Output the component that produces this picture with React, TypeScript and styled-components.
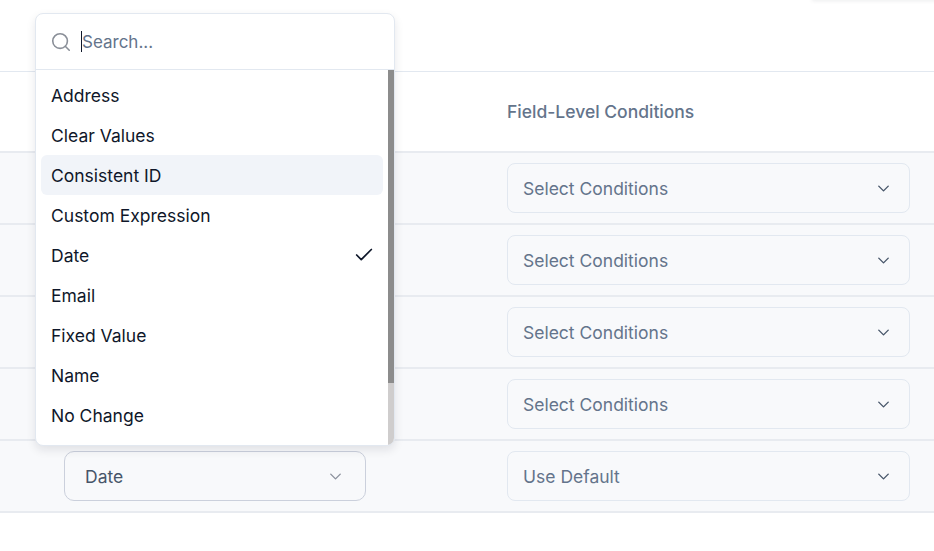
import styled, { createGlobalStyle } from 'styled-components';
import { Check, ChevronDown, Search } from 'lucide-react';

const GlobalStyle = createGlobalStyle`
	html, body {
		margin: 0;
		padding: 0;
		background: #fff;
		overflow: hidden;
	}
	body {
		font-family: Inter, 'Liberation Sans', sans-serif;
		font-size: 17.5px;
		color: #0f172a;
	}
	* {
		box-sizing: border-box;
	}
`;

type RowData = {
	method: string | null;
	condition: string;
};

const rows: RowData[] = [
	{ method: null, condition: 'Select Conditions' },
	{ method: null, condition: 'Select Conditions' },
	{ method: null, condition: 'Select Conditions' },
	{ method: null, condition: 'Select Conditions' },
	{ method: 'Date', condition: 'Use Default' },
];

const options = [
	'Address',
	'Clear Values',
	'Consistent ID',
	'Custom Expression',
	'Date',
	'Email',
	'Fixed Value',
	'Name',
	'No Change',
];

export default function App() {
	return (
		<Page>
			<GlobalStyle />
			<CornerShadow />
			<TopBar />
			<HeaderRow>
				<span />
				<HeaderLabel>Field-Level Conditions</HeaderLabel>
			</HeaderRow>
			{rows.map((row, i) => (
				<Row key={i}>
					<div>
						{row.method && (
							<SelectBox $active>
								<MethodValue>{row.method}</MethodValue>
								<ChevronDown size={19} color="#8b909c" strokeWidth={1.75} />
							</SelectBox>
						)}
					</div>
					<SelectBox>
						<ConditionValue>{row.condition}</ConditionValue>
						<ChevronDown size={19} color="#475569" strokeWidth={1.75} />
					</SelectBox>
				</Row>
			))}

			<Dropdown>
				<SearchBar>
					<SearchIcon size={22} color="#8a8f98" strokeWidth={1.75} />
					<Caret />
					<SearchInput placeholder="Search..." />
				</SearchBar>
				<OptionList>
					{options.map((option) => (
						<Option key={option} $highlighted={option === 'Consistent ID'}>
							{option}
							{option === 'Date' && <SelectedMark size={22} color="#0f172a" strokeWidth={1.9} />}
						</Option>
					))}
				</OptionList>
				<ScrollTrack>
					<ScrollThumb />
				</ScrollTrack>
			</Dropdown>
		</Page>
	);
}

const Page = styled.div`
	position: relative;
	width: 934px;
	height: 551px;
	overflow: hidden;
`;

const CornerShadow = styled.div`
	position: absolute;
	top: -20px;
	right: -20px;
	width: 142px;
	height: 20px;
	box-shadow: 0 1px 4px rgba(15, 23, 42, 0.08);
`;

const TopBar = styled.div`
	height: 72px;
	border-bottom: 1px solid #e2e8f0;
`;

const HeaderRow = styled.div`
	display: grid;
	grid-template-columns: 302px 403px;
	column-gap: 141px;
	align-items: center;
	height: 81px;
	padding-left: 64px;
	border-bottom: 2px solid #e8ebf0;
`;

const HeaderLabel = styled.div`
	font-weight: 500;
	color: #64748b;
`;

const Row = styled.div`
	display: grid;
	grid-template-columns: 302px 403px;
	column-gap: 141px;
	align-items: center;
	height: 72px;
	padding-left: 64px;
	background: #f8f9fb;
	border-bottom: 2px solid #e8ebf0;
`;

const SelectBox = styled.div<{ $active?: boolean }>`
	display: flex;
	align-items: center;
	justify-content: space-between;
	height: 50px;
	padding: ${({ $active }) => ($active ? '0 20px 0 20px' : '0 16px 0 15px')};
	background: #f8f9fb;
	border: 1px solid ${({ $active }) => ($active ? '#cbd0dc' : '#e2e8f0')};
	border-radius: ${({ $active }) => ($active ? '10px' : '8px')};
`;

const MethodValue = styled.span`
	color: #475569;
`;

const ConditionValue = styled.span`
	color: #64748b;
`;

const Dropdown = styled.div`
	position: absolute;
	top: 13px;
	left: 35px;
	width: 360px;
	height: 433px;
	display: flex;
	flex-direction: column;
	background: #fff;
	border: 1px solid #e2e8f0;
	border-radius: 8px;
	box-shadow: 0 4px 10px rgba(15, 23, 42, 0.1);
	overflow: hidden;
`;

const SearchBar = styled.div`
	display: flex;
	flex: none;
	align-items: center;
	height: 56px;
	padding: 0 14px;
	border-bottom: 1px solid #e2e8f0;
`;

const SearchIcon = styled(Search)`
	flex: none;
`;

const Caret = styled.span`
	flex: none;
	width: 1px;
	height: 21px;
	margin-left: 9px;
	background: #0f172a;
`;

const SearchInput = styled.input`
	flex: 1;
	min-width: 0;
	border: 0;
	outline: 0;
	padding: 0;
	background: transparent;
	font-family: inherit;
	font-size: 17px;
	color: #0f172a;

	&::placeholder {
		color: #64748b;
		opacity: 1;
	}
`;

const OptionList = styled.div`
	flex: 1;
	min-height: 0;
	padding: 5px 11px 5px 5px;
`;

const Option = styled.div<{ $highlighted?: boolean }>`
	display: flex;
	align-items: center;
	justify-content: space-between;
	height: 40px;
	padding: 0 10px;
	border-radius: 6px;
	background: ${({ $highlighted }) => ($highlighted ? '#f1f4f9' : 'transparent')};
`;

const SelectedMark = styled(Check)`
	margin-right: -2px;
`;

const ScrollTrack = styled.div`
	position: absolute;
	top: 56px;
	right: 0;
	bottom: 0;
	width: 6px;
	background: #cfcdcd;
`;

const ScrollThumb = styled.div`
	height: 313px;
	background: #8c8c8c;
`;
